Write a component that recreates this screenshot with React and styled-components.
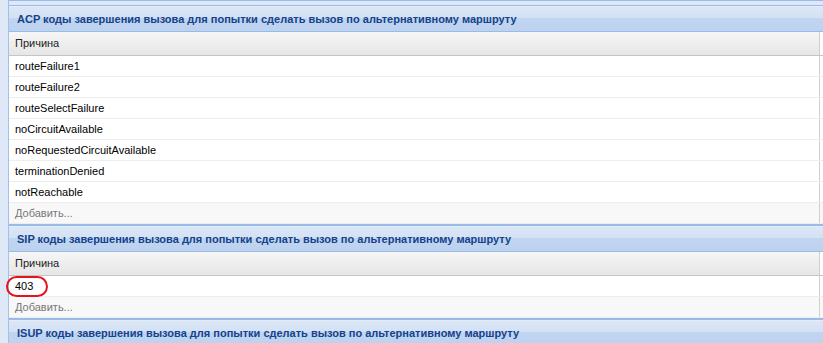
import React from 'react';
import styled, { createGlobalStyle } from 'styled-components';

const GlobalStyle = createGlobalStyle`
  html, body {
    margin: 0;
    padding: 0;
    background: #dfe8f6;
    font-family: "Liberation Sans", Arial, sans-serif;
    overflow: hidden;
  }
`;

const sections = [
  {
    title: 'ACP коды завершения вызова для попытки сделать вызов по альтернативному маршруту',
    rows: [
      'routeFailure1',
      'routeFailure2',
      'routeSelectFailure',
      'noCircuitAvailable',
      'noRequestedCircuitAvailable',
      'terminationDenied',
      'notReachable',
    ],
  },
  {
    title: 'SIP коды завершения вызова для попытки сделать вызов по альтернативному маршруту',
    rows: ['403'],
    marked: 0,
  },
  {
    title: 'ISUP коды завершения вызова для попытки сделать вызов по альтернативному маршруту',
    rows: [],
  },
];

const Page = () => (
  <Wrapper>
    <Column>
      <TopLine />
      {sections.map((s) => (
        <Section key={s.title}>
          <PanelHeader>{s.title}</PanelHeader>
          <ColumnHeader>
            <Cell>Причина</Cell>
          </ColumnHeader>
          {s.rows.map((r, i) => (
            <Row key={r}>
              <Cell>
                {r}
                {s.marked === i && <Mark />}
              </Cell>
            </Row>
          ))}
          <Row $add>
            <Cell>Добавить...</Cell>
          </Row>
        </Section>
      ))}
    </Column>
  </Wrapper>
);

const Wrapper = styled.div`
  height: 343px;
  padding-left: 8px;
  overflow: hidden;
`;

const Column = styled.div`
  border-left: 1px solid #a3c0e8;
  background: #dfe8f6;
`;

const TopLine = styled.div`
  height: 4px;
  border-top: 1px solid #99bbe8;
`;

const Section = styled.div`
  border-top: 1px solid #99bbe8;
  border-bottom: 1px solid #99bbe8;
  background: #fff;
`;

const PanelHeader = styled.div`
  height: 26px;
  line-height: 25px;
  padding-left: 8px;
  box-sizing: border-box;
  border-top: 1px solid #e4edf9;
  border-bottom: 1px solid #99bbe8;
  background: linear-gradient(#dbe7f7 0%, #d3e1f4 46%, #c0d5f0 48%, #bcd2ef 100%);
  color: #15428b;
  font-size: 11px;
  font-weight: bold;
  white-space: nowrap;
  overflow: hidden;
`;

const ColumnHeader = styled.div`
  height: 23px;
  border-bottom: 1px solid #c5c5c5;
  background: #fff;
  & > div {
    background: linear-gradient(#f6f6f6, #e6e6e6);
    line-height: 23px;
    color: #222;
  }
`;

const Row = styled.div`
  height: 20px;
  border-bottom: 1px solid #ededed;
  background: ${(p) => (p.$add ? '#f8f8f8' : '#fff')};
  color: ${(p) => (p.$add ? '#777' : '#000')};
`;

const Cell = styled.div`
  position: relative;
  width: 811px;
  height: 100%;
  box-sizing: border-box;
  padding-left: 6px;
  border-right: 1px solid #d0d0d0;
  font-size: 11px;
  line-height: 20px;
`;

const Mark = styled.span`
  position: absolute;
  left: -3px;
  top: 0;
  width: 42px;
  height: 21px;
  box-sizing: border-box;
  border: 2px solid #e3141c;
  border-radius: 11px;
`;

export default function App() {
  return (
    <>
      <GlobalStyle />
      <Page />
    </>
  );
}
